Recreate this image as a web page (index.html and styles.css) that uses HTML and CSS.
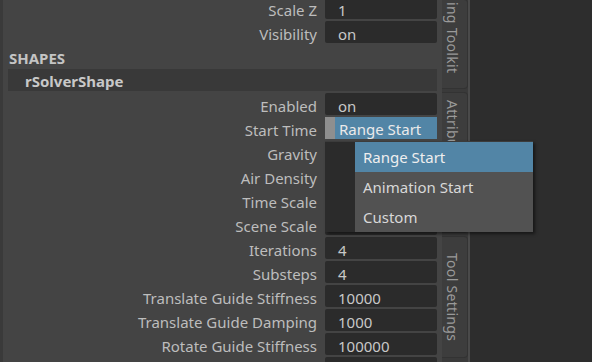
FILE: index.html
```
<!DOCTYPE html>
<html>
<head>
<meta charset="utf-8">
<link rel="stylesheet" href="styles.css">
</head>
<body>
<div class="app">
  <div class="edge"></div>
  <div class="panel">
    <div class="rows top">
      <div class="row"><span class="label">Scale Z</span><span class="field">1</span></div>
      <div class="row"><span class="label">Visibility</span><span class="field">on</span></div>
    </div>
    <div class="section">SHAPES</div>
    <div class="subhead">rSolverShape</div>
    <div class="rows">
      <div class="row"><span class="label">Enabled</span><span class="field">on</span></div>
      <div class="row"><span class="label">Start Time</span><span class="combo"><span class="grip"></span><span class="combo-val">Range Start</span></span></div>
      <div class="row"><span class="label">Gravity</span><span class="field"></span></div>
      <div class="row"><span class="label">Air Density</span><span class="field"></span></div>
      <div class="row"><span class="label">Time Scale</span><span class="field"></span></div>
      <div class="row"><span class="label">Scene Scale</span><span class="field"></span></div>
      <div class="row"><span class="label">Iterations</span><span class="field">4</span></div>
      <div class="row"><span class="label">Substeps</span><span class="field">4</span></div>
      <div class="row"><span class="label">Translate Guide Stiffness</span><span class="field">10000</span></div>
      <div class="row"><span class="label">Translate Guide Damping</span><span class="field">1000</span></div>
      <div class="row"><span class="label">Rotate Guide Stiffness</span><span class="field">100000</span></div>
      <div class="row"><span class="label"></span><span class="field"></span></div>
    </div>
  </div>
  <div class="tabs">
    <div class="tab t1"><span>ing Toolkit</span></div>
    <div class="tab t2"><span>Attribute Editor</span></div>
    <div class="tab t3"><span>Tool Settings</span></div>
  </div>
  <div class="divider"></div>
  <div class="dark"></div>
  <div class="popup">
    <div class="popup-side"></div>
    <div class="popup-items">
      <div class="item sel">Range Start</div>
      <div class="item">Animation Start</div>
      <div class="item">Custom</div>
    </div>
  </div>
</div>
</body>
</html>
```
FILE: styles.css
```
* { box-sizing: border-box; }
html, body { margin: 0; padding: 0; }
body {
  width: 592px; height: 362px; overflow: hidden;
  background: #2d2d2d;
  font-family: "Noto Sans", "Open Sans", sans-serif;
  font-size: 15px;
  color: #bdbdbd;
}
.app { position: relative; display: flex; height: 362px; }
.edge { width: 3px; background: #3a3a3a; flex: none; }
.panel {
  width: 439px; flex: none; background: #444444;
  padding: 0 5px 0 5px;
  display: flex; flex-direction: column;
}
.rows { display: flex; flex-direction: column; gap: 2px; }
.rows.top { margin-top: -3px; }
.row { display: flex; height: 22px; align-items: center; gap: 8px; }
.label {
  width: 309px; text-align: right; white-space: nowrap; color: #bdbdbd;
  line-height: 22px; padding-top: 3px;
}
.field {
  width: 112px; height: 22px; background: #2b2b2b; border-radius: 2px;
  padding-left: 13px; line-height: 22px; padding-top: 2px; color: #c8c8c8;
}
.combo { width: 112px; height: 22px; display: flex; }
.grip { width: 10px; background: #8f8f8f; }
.combo-val {
  flex: 1; background: #5285a6; color: #eaeaea; padding-left: 4px; line-height: 22px;
  padding-top: 1px;
}
.section {
  height: 24px; margin-top: 2px; line-height: 27px; padding-left: 1px;
  font-weight: bold; color: #c4c4c4;
}
.subhead {
  height: 22px; background: #393939; margin-bottom: 2px;
  padding-left: 17px; line-height: 25px; font-weight: bold; color: #c8c8c8;
}
.tabs {
  width: 26px; flex: none; background: #3a3a3a;
  display: flex; flex-direction: column; gap: 3px;
}
.tab {
  background: #3d3d3d; border: 1px solid #333; border-left: none;
  border-radius: 0 4px 4px 0;
  display: flex; justify-content: flex-start; padding-top: 2px;
  color: #9a9a9a; font-size: 14px; overflow: hidden;
}
.tab span { writing-mode: vertical-rl; white-space: nowrap; padding-left: 1px; letter-spacing: 0.3px; }
.t1 { height: 90px; margin-top: -1px; padding-top: 0; }
.t1 span { margin-top: 2px; }
.t2 { height: 141px; padding-top: 7px; }
.t3 { height: 122px; padding-top: 16px; }
.divider { width: 2px; flex: none; background: #4a4a4a; }
.dark { flex: 1; background: #2d2d2d; }
.popup {
  position: absolute; left: 325px; top: 141px; width: 208px; height: 91px;
  display: flex; background: #2b2b2b;
  border-top: 1px solid #3c3c3c;
  box-shadow: 2px 2px 3px rgba(0,0,0,0.5);
}
.popup-side { width: 30px; }
.popup-items { flex: 1; background: #525252; }
.item { height: 30px; line-height: 31px; padding-left: 8px; color: #d8d8d8; }
.item.sel { background: #5285a6; color: #eeeeee; }
```
